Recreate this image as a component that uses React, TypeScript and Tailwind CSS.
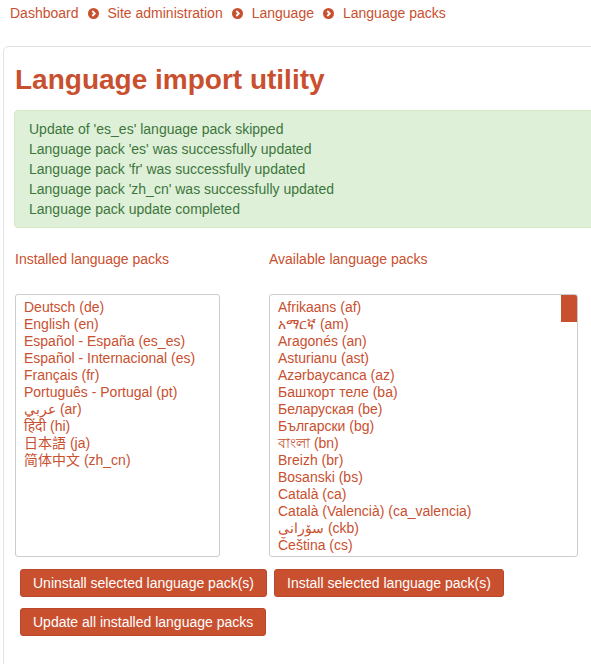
import React from 'react';

const installed = [
  'Deutsch (de)',
  'English (en)',
  'Español - España (es_es)',
  'Español - Internacional (es)',
  'Français (fr)',
  'Português - Portugal (pt)',
  'عربي (ar)',
  'हिंदी (hi)',
  '日本語 (ja)',
  '简体中文 (zh_cn)',
];

const available = [
  'Afrikaans (af)',
  'አማርኛ (am)',
  'Aragonés (an)',
  'Asturianu (ast)',
  'Azərbaycanca (az)',
  'Башҡорт теле (ba)',
  'Беларуская (be)',
  'Български (bg)',
  'বাংলা (bn)',
  'Breizh (br)',
  'Bosanski (bs)',
  'Català (ca)',
  'Català (Valencià) (ca_valencia)',
  'سۆرانی (ckb)',
  'Čeština (cs)',
];

const messages = [
  "Update of 'es_es' language pack skipped",
  "Language pack 'es' was successfully updated",
  "Language pack 'fr' was successfully updated",
  "Language pack 'zh_cn' was successfully updated",
  'Language pack update completed',
];

function Chevron() {
  return (
    <svg width="11" height="11" viewBox="0 0 11 11" className="shrink-0">
      <circle cx="5.5" cy="5.5" r="5.5" fill="#c9502f" />
      <path d="M4.3 3 L6.8 5.5 L4.3 8" stroke="#fff" strokeWidth="1.8" fill="none" />
    </svg>
  );
}

function Button({ children }: { children: React.ReactNode }) {
  return (
    <button className="h-[28px] px-[12px] rounded-[3px] border border-[#b9472a] bg-[#c9502f] text-white text-[14px] leading-[20px] whitespace-nowrap">
      {children}
    </button>
  );
}

export default function App() {
  const crumbs = ['Dashboard', 'Site administration', 'Language', 'Language packs'];
  return (
    <div className="w-[591px] h-[664px] overflow-hidden bg-white text-[#c9502f] font-['Liberation_Sans','Noto_Sans','Noto_Sans_CJK_SC',sans-serif] text-[14px]">
      <nav className="flex items-center h-[46px] pl-[10px] pb-[20px]">
        {crumbs.map((c, i) => (
          <React.Fragment key={c}>
            <span className="leading-[20px]">{c}</span>
            {i < crumbs.length - 1 && (
              <span className="mx-[9px] flex">
                <Chevron />
              </span>
            )}
          </React.Fragment>
        ))}
      </nav>

      <div className="ml-[3px] w-[640px] border border-[#e3e3e3] rounded-[5px] pl-[10px] pt-[16px] pb-[40px]">
        <h1 className="text-[28px] font-bold leading-[34px] pl-[1px] mb-[13px]">Language import utility</h1>

        <div className="border border-[#d6e9c6] bg-[#dff0d8] rounded-[4px] text-[#3c763d] px-[14px] py-[8px] leading-[20px]">
          {messages.map((m) => (
            <div key={m}>{m}</div>
          ))}
        </div>

        <div className="flex pl-[1px] mt-[21px]">
          <div className="w-[254px] shrink-0">
            <div className="leading-[20px] h-[45px]">Installed language packs</div>
            <div className="w-[205px] h-[263px] border border-[#cccccc] rounded-[3px] px-[8px] py-[4px] leading-[17px] overflow-hidden">
              {installed.map((l) => (
                <div key={l} className="whitespace-nowrap">{l}</div>
              ))}
            </div>
            <div className="pl-[5px] mt-[12px] flex flex-col items-start gap-[11px]">
              <Button>Uninstall selected language pack(s)</Button>
              <Button>Update all installed language packs</Button>
            </div>
          </div>
          <div>
            <div className="leading-[20px] h-[45px]">Available language packs</div>
            <div className="relative w-[309px] h-[263px] border border-[#cccccc] rounded-[3px] px-[8px] py-[4px] leading-[17px] overflow-hidden">
              {available.map((l) => (
                <div key={l} className="whitespace-nowrap">{l}</div>
              ))}
              <div className="absolute top-0 right-0 w-[16px] h-[27px] bg-[#c9502f]" />
            </div>
            <div className="pl-[5px] mt-[12px]">
              <Button>Install selected language pack(s)</Button>
            </div>
          </div>
        </div>
      </div>
    </div>
  );
}
